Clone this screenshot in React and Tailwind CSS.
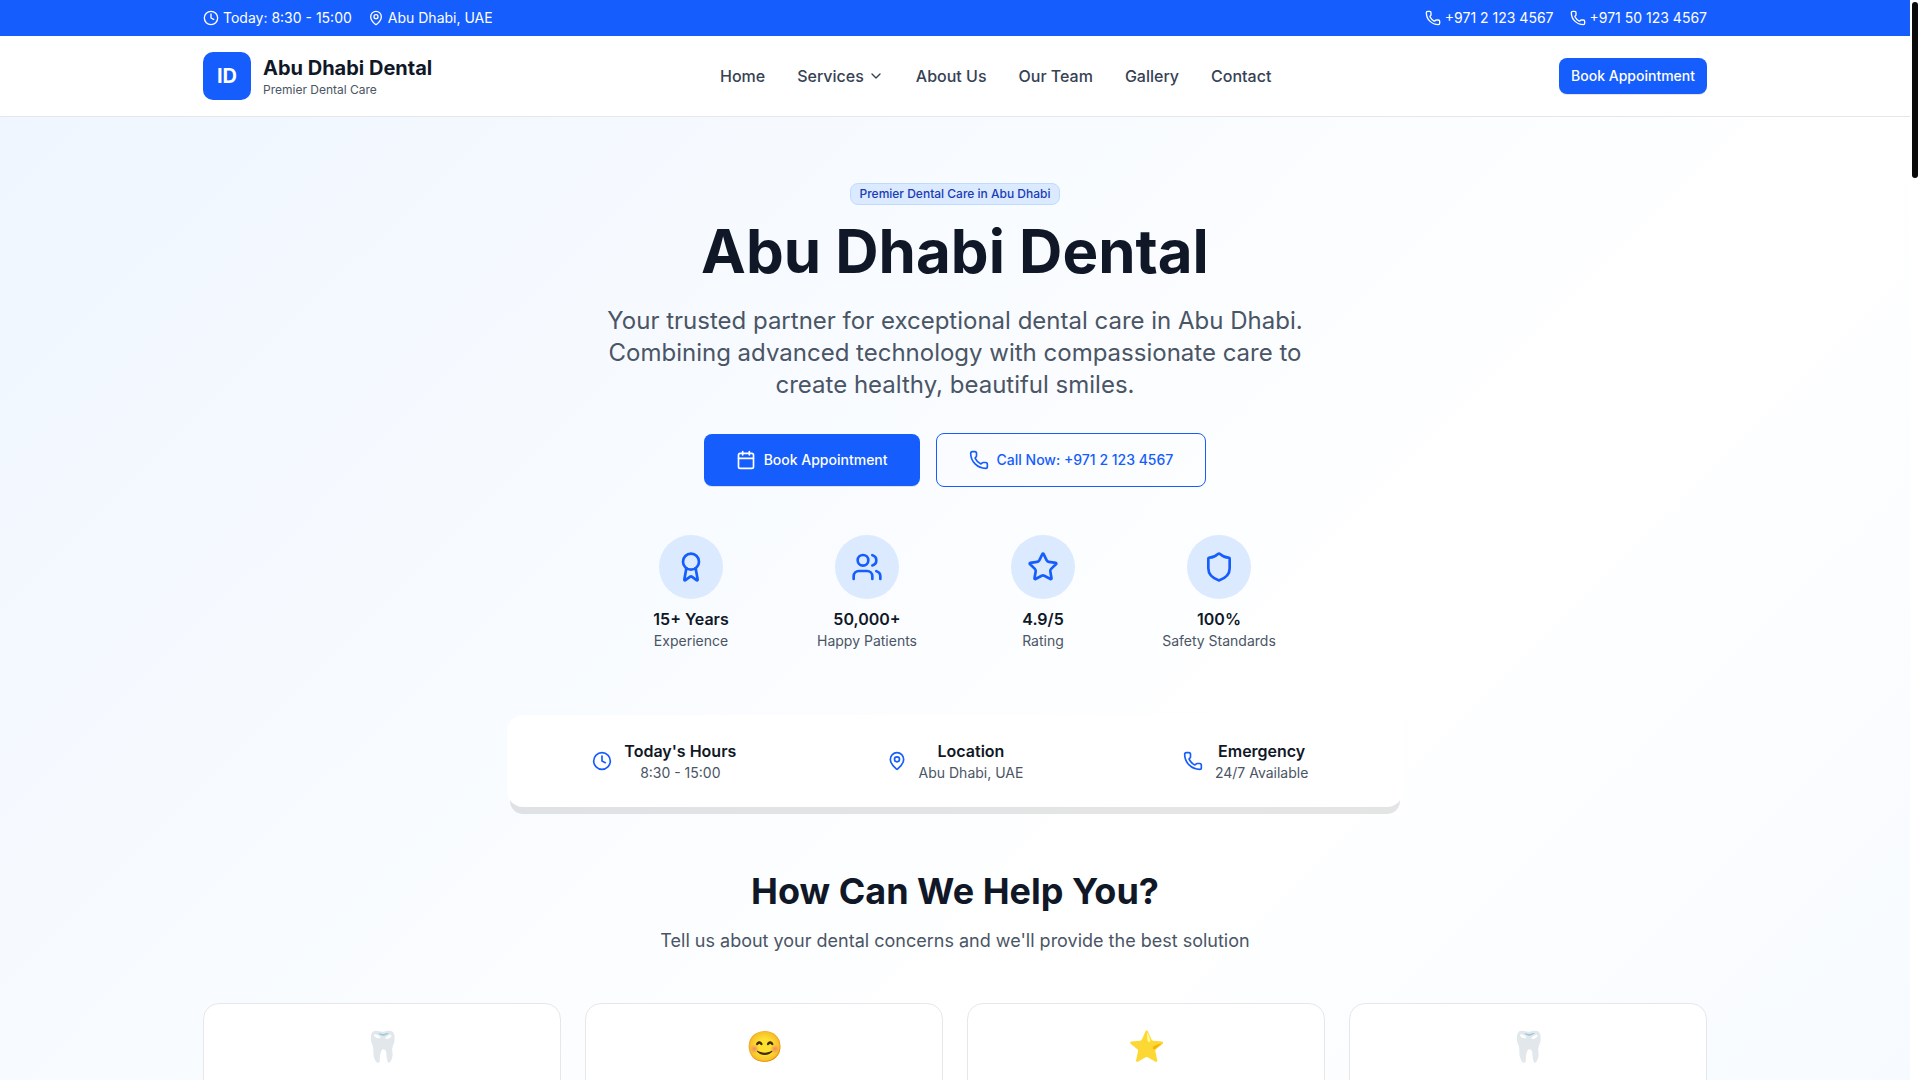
import { Award, Calendar, ChevronDown, Clock, MapPin, Phone, Shield, Star, Users } from 'lucide-react';

const NAV_LINKS = [
  { label: 'Home', href: '#home' },
  { label: 'Services', href: '#services', hasMenu: true },
  { label: 'About Us', href: '#about' },
  { label: 'Our Team', href: '#team' },
  { label: 'Gallery', href: '#gallery' },
  { label: 'Contact', href: '#contact' },
];

const STATS = [
  { icon: Award, value: '15+ Years', label: 'Experience' },
  { icon: Users, value: '50,000+', label: 'Happy Patients' },
  { icon: Star, value: '4.9/5', label: 'Rating' },
  { icon: Shield, value: '100%', label: 'Safety Standards' },
];

const QUICK_INFO = [
  { icon: Clock, title: "Today's Hours", text: '8:30 - 15:00' },
  { icon: MapPin, title: 'Location', text: 'Abu Dhabi, UAE' },
  { icon: Phone, title: 'Emergency', text: '24/7 Available' },
];

const CONCERNS = ['🦷', '😊', '⭐', '🦷'];

const Container = ({ className = '', children }) => (
  <div className={`mx-auto w-full max-w-screen-2xl px-4 ${className}`}>{children}</div>
);

// Blue strip with opening hours and phone numbers
const TopBar = () => (
  <div className="bg-[#155dfc] py-2 text-sm text-white">
    <Container className="flex items-center justify-between">
      <div className="flex items-center gap-4">
        <span className="flex items-center gap-1">
          <Clock className="size-4" />
          Today: 8:30 - 15:00
        </span>
        <span className="flex items-center gap-1">
          <MapPin className="size-4" />
          Abu Dhabi, UAE
        </span>
      </div>
      <div className="flex items-center gap-4">
        <a href="tel:+97121234567" className="flex items-center gap-1">
          <Phone className="size-4" />
          +971 2 123 4567
        </a>
        <a href="tel:+971501234567" className="flex items-center gap-1">
          <Phone className="size-4" />
          +971 50 123 4567
        </a>
      </div>
    </Container>
  </div>
);

const Header = () => (
  <header className="border-b border-gray-200 bg-white py-4">
    <Container className="flex items-center justify-between">
      <a href="#home" className="flex items-center gap-3">
        <span className="flex size-12 items-center justify-center rounded-[10px] bg-[#155dfc] text-xl font-bold text-white">
          ID
        </span>
        <span>
          <span className="block text-xl font-bold text-gray-900">Abu Dhabi Dental</span>
          <span className="block text-xs text-gray-600">Premier Dental Care</span>
        </span>
      </a>
      <nav className="flex items-center gap-8 font-medium text-gray-700">
        {NAV_LINKS.map((link) =>
          link.hasMenu ? (
            <button key={link.label} type="button" className="flex items-center gap-1">
              {link.label}
              <ChevronDown className="size-4" />
            </button>
          ) : (
            <a key={link.label} href={link.href}>
              {link.label}
            </a>
          )
        )}
      </nav>
      <button
        type="button"
        className="h-9 rounded-lg bg-[#155dfc] px-3 text-sm font-medium text-white shadow-[0_1px_0_rgba(0,0,0,0.1)]"
      >
        Book Appointment
      </button>
    </Container>
  </header>
);

const Hero = () => (
  <section className="min-h-[1900px] bg-linear-to-br from-blue-50 via-white to-blue-50 py-16">
    <Container>
      <div className="mx-auto flex max-w-4xl flex-col items-center text-center">
        <div className="flex h-6 items-end">
          <span className="rounded-lg border border-blue-200 bg-blue-100 px-2 py-0.5 text-xs font-medium text-blue-800">
            Premier Dental Care in Abu Dhabi
          </span>
        </div>
        <h1 className="mt-4 text-6xl leading-none font-bold text-gray-900">Abu Dhabi Dental</h1>
        <p className="mt-6 max-w-3xl text-2xl text-gray-600">
          Your trusted partner for exceptional dental care in Abu Dhabi. Combining advanced technology
          with compassionate care to create healthy, beautiful smiles.
        </p>

        <div className="mt-8 flex items-center gap-4">
          <button
            type="button"
            className="flex items-center gap-2 rounded-lg bg-[#155dfc] px-8 py-4 text-sm font-medium text-white shadow-[0_1px_0_rgba(0,0,0,0.1)]"
          >
            <Calendar className="size-5" />
            Book Appointment
          </button>
          <a
            href="tel:+97121234567"
            className="flex items-center gap-2 rounded-lg border border-[#155dfc] px-8 py-4 text-sm font-medium text-[#155dfc]"
          >
            <Phone className="size-5" />
            Call Now: +971 2 123 4567
          </a>
        </div>

        {/* Stats */}
        <div className="mt-12 grid w-full max-w-2xl grid-cols-4 gap-8">
          {STATS.map(({ icon: Icon, value, label }) => (
            <div key={label} className="flex flex-col items-center">
              <div className="mb-2 flex size-16 items-center justify-center rounded-full bg-blue-100">
                <Icon className="size-8 text-[#155dfc]" />
              </div>
              <p className="font-semibold text-gray-900">{value}</p>
              <p className="text-sm whitespace-nowrap text-gray-600">{label}</p>
            </div>
          ))}
        </div>

        {/* Hours, location and emergency line */}
        <div className="mt-16 grid w-full grid-cols-3 gap-6 rounded-2xl bg-white p-6 shadow-[0_10px_0_-3px_rgba(0,0,0,0.1)]">
          {QUICK_INFO.map(({ icon: Icon, title, text }) => (
            <div key={title} className="flex items-center justify-center gap-3">
              <Icon className="size-5 text-[#155dfc]" />
              <div>
                <p className="font-semibold text-gray-900">{title}</p>
                <p className="text-sm text-gray-600">{text}</p>
              </div>
            </div>
          ))}
        </div>
      </div>

      <div className="mt-16 text-center">
        <h2 className="text-4xl font-bold text-gray-900">How Can We Help You?</h2>
        <p className="mt-4 text-lg text-gray-600">
          Tell us about your dental concerns and we'll provide the best solution
        </p>
      </div>

      <div className="mt-12 grid grid-cols-4 gap-6">
        {CONCERNS.map((emoji, index) => (
          <div key={index} className="h-56 rounded-2xl border border-gray-200 bg-white p-6 text-center">
            <span className="text-3xl">{emoji}</span>
          </div>
        ))}
      </div>
    </Container>
  </section>
);

const App = () => (
  <div className="h-screen overflow-hidden bg-white pr-2.5 font-['Inter',sans-serif] text-base text-gray-900">
    <TopBar />
    <Header />
    <Hero />

    {/* Scroll thumb */}
    <div className="fixed top-0.5 right-0.5 h-44 w-1.5 rounded-full bg-neutral-950" />
  </div>
);

export default App;
